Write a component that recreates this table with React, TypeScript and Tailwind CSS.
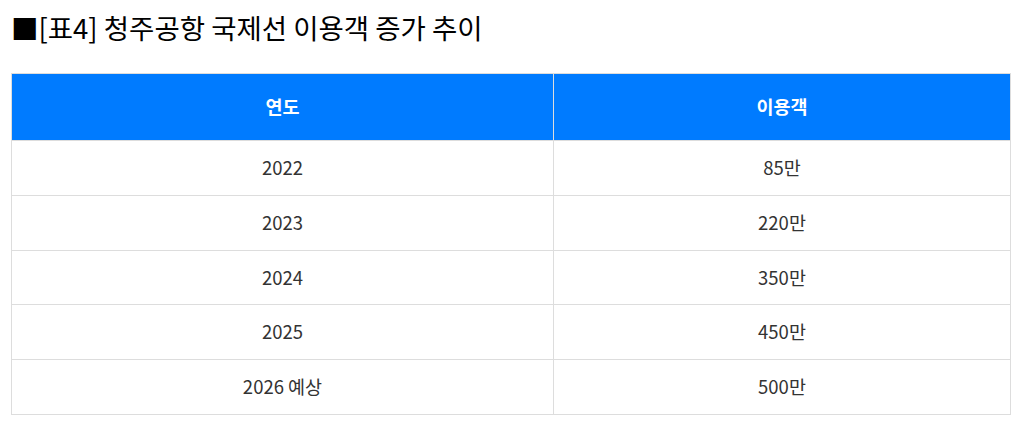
import React from "react";

const rows: [string, string][] = [
  ["2022", "85만"],
  ["2023", "220만"],
  ["2024", "350만"],
  ["2025", "450만"],
  ["2026 예상", "500만"],
];

export default function App() {
  return (
    <div
      className="bg-white w-[1023px] h-[427px] pl-[11px] pt-[7px]"
      style={{ fontFamily: '"Noto Sans CJK KR", "Noto Sans", sans-serif' }}
    >
      <h2 className="text-[27.5px] leading-[40px] text-black font-normal">■[표4] 청주공항 국제선 이용객 증가 추이</h2>
      <table className="mt-[26px] w-[1000px] border-collapse table-fixed">
        <colgroup>
          <col className="w-[542px]" />
          <col />
        </colgroup>
        <thead>
          <tr className="bg-[#007bff] h-[67px]">
            <th className="border border-[#dddddd] text-white text-[18.5px] font-bold">연도</th>
            <th className="border border-[#dddddd] text-white text-[18.5px] font-bold">이용객</th>
          </tr>
        </thead>
        <tbody>
          {rows.map(([y, v]) => (
            <tr key={y} className="h-[54.8px]">
              <td className="border border-[#dddddd] text-center text-[18.5px] text-[#333333]">{y}</td>
              <td className="border border-[#dddddd] text-center text-[18.5px] text-[#333333]">{v}</td>
            </tr>
          ))}
        </tbody>
      </table>
    </div>
  );
}
